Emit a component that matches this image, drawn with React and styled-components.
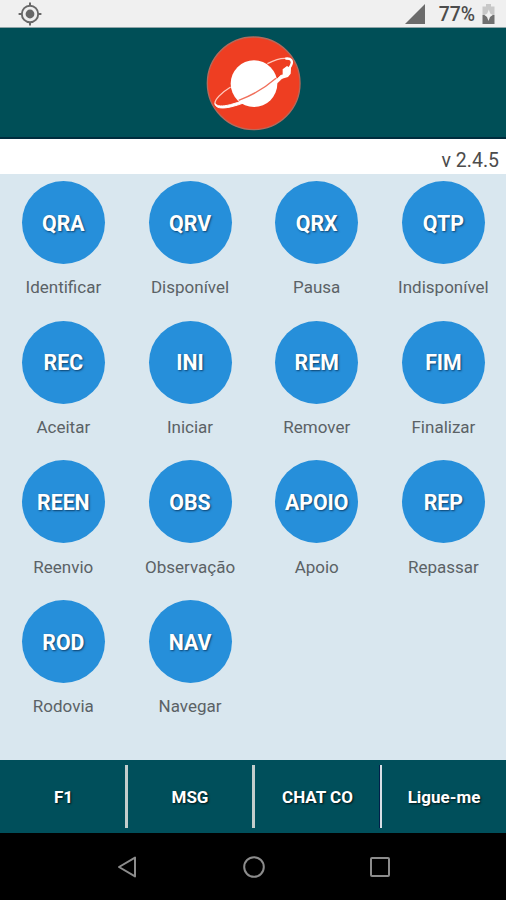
import React from "react";
import styled, { createGlobalStyle } from "styled-components";

const actions = [
  { code: "QRA", label: "Identificar" },
  { code: "QRV", label: "Disponível" },
  { code: "QRX", label: "Pausa" },
  { code: "QTP", label: "Indisponível" },
  { code: "REC", label: "Aceitar" },
  { code: "INI", label: "Iniciar" },
  { code: "REM", label: "Remover" },
  { code: "FIM", label: "Finalizar" },
  { code: "REEN", label: "Reenvio" },
  { code: "OBS", label: "Observação" },
  { code: "APOIO", label: "Apoio" },
  { code: "REP", label: "Repassar" },
  { code: "ROD", label: "Rodovia" },
  { code: "NAV", label: "Navegar" },
];

const tabs = ["F1", "MSG", "CHAT CO", "Ligue-me"];

function PlanetLogo() {
  return (
    <svg width="114" height="111" viewBox="0 0 342 333">
      <circle cx="173" cy="166" r="139" fill="#ee3e22" stroke="#b56a5c" strokeWidth="4" />
      <circle cx="174" cy="167" r="70" fill="#fff" />
      {/* far side of the ring */}
      <path
        d="M104 177 C76 194 54 216 57 229 M214 107 C238 95 264 88 278 93"
        fill="none"
        stroke="#ffc9bd"
        strokeWidth="4"
      />
      {/* near side */}
      <path
        d="M57 227 C59 240 76 243 103 237 C158 225 222 190 261 148 L256 141 C217 182 158 216 103 230 C78 236 64 235 57 227 Z"
        fill="#fff"
        stroke="#fff"
        strokeWidth="3"
      />
      {/* shadow line where the ring crosses the planet */}
      <path d="M128 217 C168 202 207 180 240 151" fill="none" stroke="#f0705c" strokeWidth="4" />
      <path d="M268 92 C285 89 292 99 285 112 L279 123" fill="none" stroke="#fff" strokeWidth="7" />
      <path
        d="M260 124 L273 114 L285 121 L284 137 L276 147 L258 152 L247 153 L260 139 Z"
        fill="#fff"
      />
    </svg>
  );
}

function LocationIcon() {
  return (
    <svg width="24" height="24" viewBox="0 0 24 24" fill="none" stroke="#686868">
      <circle cx="12" cy="12" r="8.2" strokeWidth="1.9" />
      <circle cx="12" cy="12" r="4.4" fill="#686868" stroke="none" />
      <path d="M12 .6v3.5M12 19.9v3.5M.6 12h3.5M19.9 12h3.5" strokeWidth="2" />
    </svg>
  );
}

function SignalIcon() {
  return (
    <svg width="20" height="20" viewBox="0 0 20 20">
      <path d="M20 0V20H0Z" fill="#6b6b6b" />
    </svg>
  );
}

function BatteryIcon() {
  return (
    <svg width="13" height="20" viewBox="0 0 13 20">
      <path d="M4 0H9V2.5H12.5V11H.5V2.5H4Z" fill="#c8c8c8" />
      <path d="M.5 11H12.5V20H.5Z" fill="#707070" />
      <path d="M6.8 5.5L8.2 9.5L10.8 11L8 13L6.5 17L5 13L2.4 11L5.2 9.5Z" fill="#f1f1f1" />
    </svg>
  );
}

function App() {
  return (
    <Screen>
      <GlobalStyle />
      <StatusBar>
        <LocationIcon />
        <StatusGroup>
          <SignalIcon />
          <Percent>77%</Percent>
          <BatteryIcon />
        </StatusGroup>
      </StatusBar>
      <Header>
        <PlanetLogo />
      </Header>
      <Version>v 2.4.5</Version>
      <ActionGrid>
        {actions.map(({ code, label }) => (
          <Action key={code}>
            <RoundButton>{code}</RoundButton>
            <ActionLabel>{label}</ActionLabel>
          </Action>
        ))}
      </ActionGrid>
      <TabBar>
        {tabs.map((tab) => (
          <Tab key={tab}>{tab}</Tab>
        ))}
      </TabBar>
      <NavBar>
        <svg width="22" height="24" viewBox="0 0 22 24">
          <path d="M19 2.6V21.4L3 12Z" fill="none" stroke="#8c8c8c" strokeWidth="2" strokeLinejoin="round" />
        </svg>
        <svg width="24" height="24" viewBox="0 0 24 24">
          <circle cx="12" cy="12" r="9.8" fill="none" stroke="#8c8c8c" strokeWidth="2" />
        </svg>
        <svg width="22" height="24" viewBox="0 0 22 24">
          <rect x="2" y="3" width="18" height="18" rx="1" fill="none" stroke="#8c8c8c" strokeWidth="2" />
        </svg>
      </NavBar>
    </Screen>
  );
}

export default App;

const GlobalStyle = createGlobalStyle`
  * {
    box-sizing: border-box;
  }

  body {
    margin: 0;
    font-family: Roboto, "Liberation Sans", sans-serif;
  }
`;

const Screen = styled.div`
  display: flex;
  flex-direction: column;
  width: 506px;
  height: 900px;
  overflow: hidden;
  background: #d9e7ef;
`;

const StatusBar = styled.div`
  display: flex;
  justify-content: space-between;
  align-items: center;
  height: 28px;
  padding: 0 11px 0 18px;
  background: #f0f0f0;
  border-bottom: 1px solid #8fa5a8;
`;

const StatusGroup = styled.div`
  display: flex;
  align-items: center;
`;

const Percent = styled.span`
  margin: 2px 7px 0 14px;
  font-size: 19.4px;
  line-height: 24px;
  font-weight: 500;
  color: #4c4c4c;
`;

const Header = styled.header`
  display: flex;
  justify-content: center;
  height: 111px;
  background: #004f57;
  border-bottom: 2px solid #002c3d;
`;

const Version = styled.div`
  height: 35px;
  padding: 2px 7px 0 0;
  background: #fff;
  color: #4c4c4c;
  font-size: 19.5px;
  line-height: 40px;
  text-align: right;
`;

const ActionGrid = styled.main`
  flex: 1;
  display: grid;
  grid-template-columns: repeat(4, 126.7px);
  grid-auto-rows: 139.7px;
  padding-top: 7px;
`;

const Action = styled.div`
  display: flex;
  flex-direction: column;
  align-items: center;
`;

const RoundButton = styled.button`
  width: 83px;
  height: 83px;
  padding: 1px 0 0;
  border: none;
  border-radius: 50%;
  background: #268fda;
  color: #fff;
  font-family: inherit;
  font-size: 21.3px;
  font-weight: 700;
  text-shadow: 1px 1px 2px rgba(0, 30, 60, 0.7);
`;

const ActionLabel = styled.span`
  margin-top: 12.4px;
  font-size: 17px;
  line-height: 22px;
  color: #5b6266;
`;

const TabBar = styled.nav`
  display: grid;
  grid-template-columns: 125px 127px 128px 1fr;
  height: 73px;
  padding: 5px 0;
  background: #004f5b;
`;

const Tab = styled.div`
  display: flex;
  justify-content: center;
  align-items: center;
  padding-top: 1px;
  color: #fff;
  font-size: 17px;
  font-weight: 700;
  text-shadow: 1px 1px 2px rgba(0, 0, 0, 0.8);

  & + & {
    border-left: 3px solid #c3cdcc;
  }

  &:first-child {
    padding-left: 2px;
  }

  &:last-child {
    border-left: 2px solid #d8dfe6;
    box-shadow: -1px 0 0 #00204a;
  }
`;

const NavBar = styled.div`
  display: flex;
  justify-content: space-between;
  align-items: center;
  height: 67px;
  padding: 0 115px 0 116px;
  background: #000;
`;
